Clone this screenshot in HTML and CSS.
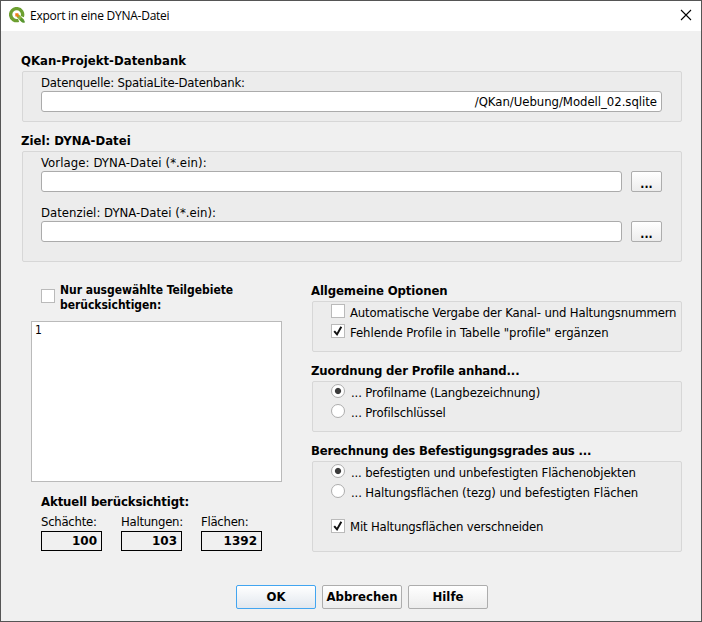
FILE: index.html
```html
<!DOCTYPE html>
<html lang="de">
<head>
<meta charset="utf-8">
<title>Export in eine DYNA-Datei</title>
<link rel="stylesheet" href="styles.css">
</head>
<body>
<div class="dialog">
  <header class="titlebar">
    <svg class="logo" width="16" height="16" viewBox="0 0 16 16">
      <path d="M9.6 13.3A6 6 0 1 1 13.3 9.6" fill="none" stroke="#6c9f30" stroke-width="3.4"/>
      <path d="M8.3 8.3L14 14" stroke="#8cb63c" stroke-width="3.4"/>
      <path d="M10.5 12.8l2-2 3.2 3.2v1.8h-2z" fill="#589632"/>
      <path d="M6.3 6.3h3.4L8.8 7.5l1.4 1.4-1.3 1.3-1.4-1.4-1.2.9z" fill="#ee7913"/>
    </svg>
    <span class="title">Export in eine DYNA-Datei</span>
    <svg class="close" width="12" height="12" viewBox="0 0 12 12"><path d="M1 1l10 10M11 1L1 11" stroke="#000" stroke-width="1.1" fill="none"/></svg>
  </header>
  <main class="content">
    <section>
      <h2><span class="w-qkan">QKan-Projekt-Datenbank</span></h2>
      <div class="group source">
        <div class="label"><span class="w-quelle">Datenquelle: SpatiaLite-Datenbank:</span></div>
        <div class="input right"><span class="w-path">/QKan/Uebung/Modell_02.sqlite</span></div>
      </div>
    </section>
    <section class="target-section">
      <h2><span class="w-ziel">Ziel: DYNA-Datei</span></h2>
      <div class="group target">
        <div class="label"><span class="w-vorlage">Vorlage: DYNA-Datei (*.ein):</span></div>
        <div class="file-row"><div class="input"></div><div class="browse">...</div></div>
        <div class="label second"><span class="w-datenziel">Datenziel: DYNA-Datei (*.ein):</span></div>
        <div class="file-row"><div class="input"></div><div class="browse">...</div></div>
      </div>
    </section>
    <div class="columns">
      <div class="left">
        <div class="only">
          <i class="check"></i>
          <b><span>Nur ausgewählte Teilgebiete</span><br><span>berücksichtigen:</span></b>
        </div>
        <div class="list">1</div>
        <h2 class="current"><span class="w-aktuell">Aktuell berücksichtigt:</span></h2>
        <div class="counts">
          <div><div class="label"><span class="w-count">Schächte:</span></div><div class="count">100</div></div>
          <div><div class="label"><span class="w-count">Haltungen:</span></div><div class="count">103</div></div>
          <div><div class="label"><span class="w-count">Flächen:</span></div><div class="count">1392</div></div>
        </div>
      </div>
      <div class="options">
        <section>
          <h2><span class="w-allg">Allgemeine Optionen</span></h2>
          <div class="group opts">
            <div class="option"><i class="check"></i><span class="w-auto">Automatische Vergabe der Kanal- und Haltungsnummern</span></div>
            <div class="option"><i class="check"><svg width="12" height="12" viewBox="0 0 12 12"><path d="M2.2 6.2L5 9.4 9.3 1.8" /></svg></i><span class="w-fehl">Fehlende Profile in Tabelle "profile" ergänzen</span></div>
          </div>
        </section>
        <section>
          <h2><span class="w-zuord">Zuordnung der Profile anhand...</span></h2>
          <div class="group opts">
            <div class="option"><i class="radio on"></i><span class="w-name">... Profilname (Langbezeichnung)</span></div>
            <div class="option"><i class="radio"></i><span>... Profilschlüssel</span></div>
          </div>
        </section>
        <section>
          <h2><span class="w-berech">Berechnung des Befestigungsgrades aus ...</span></h2>
          <div class="group opts tall">
            <div class="option"><i class="radio on"></i><span class="w-bef">... befestigten und unbefestigten Flächenobjekten</span></div>
            <div class="option"><i class="radio"></i><span>... Haltungsflächen (tezg) und befestigten Flächen</span></div>
            <div class="option cut"><i class="check"><svg width="12" height="12" viewBox="0 0 12 12"><path d="M2.2 6.2L5 9.4 9.3 1.8" /></svg></i><span class="w-mit">Mit Haltungsflächen verschneiden</span></div>
          </div>
        </section>
      </div>
    </div>
    <footer class="buttons">
      <div class="button default">OK</div>
      <div class="button">Abbrechen</div>
      <div class="button">Hilfe</div>
    </footer>
  </main>
</div>
</body>
</html>
```

FILE: styles.css
```css
* { box-sizing: border-box; }
body {
  margin: 0;
  font-family: "DejaVu Sans Condensed", "DejaVu Sans", sans-serif;
  font-stretch: condensed;
  font-size: 13px;
  color: #000;
}
.dialog {
  width: 702px;
  height: 622px;
  border: 1px solid #555;
  background: #f0f0f0;
  overflow: hidden;
}
.titlebar {
  height: 30px;
  background: #fff;
  display: flex;
  align-items: center;
  padding: 0 9px 2px 8px;
  font: 12px "Open Sans", sans-serif;
}
.title { margin-left: 5px; flex: 1; white-space: nowrap; letter-spacing: -.25px; }
.content { padding: 19px 19px 0 20px; }
span { white-space: nowrap; }
h2 {
  margin: 0;
  height: 20px;
  font-size: 13px;
  font-weight: bold;
  line-height: 22px;
}
.w-qkan, .w-ziel { letter-spacing: .03px; }
.w-aktuell, .w-allg { letter-spacing: -.1px; }
.w-zuord { letter-spacing: -.13px; }
.w-berech { letter-spacing: -.17px; }
.w-quelle { letter-spacing: -.17px; }
.w-path { letter-spacing: -.03px; }
.w-vorlage { letter-spacing: .09px; }
.w-datenziel { letter-spacing: .02px; }
.w-count { letter-spacing: -.27px; }
.group {
  margin: 1px 0 0 1px;
  border: 1px solid #d7d7d7;
  border-radius: 2px;
  background: #ececec;
}
.source { height: 51px; padding: 3px 19px 0 18px; }
.target-section { margin-top: 8px; }
.target { height: 111px; padding: 3px 19px 0 18px; }
.label { height: 16px; line-height: 16px; }
.label.second { margin-top: 13px; }
.input {
  flex: 1;
  height: 21px;
  line-height: 20px;
  border: 1px solid #ababab;
  border-radius: 3px;
  background: #fff;
  padding: 0 4px;
}
.right { text-align: right; }
.file-row { display: flex; gap: 9px; }
.browse {
  width: 31px;
  height: 21px;
  border: 1px solid #adadad;
  border-radius: 2px;
  background: linear-gradient(#fff, #ececec);
  text-align: center;
  font-size: 12px;
  font-weight: bold;
  line-height: 25px;
}
.columns { display: flex; margin-top: 18px; height: 272px; }
.left { width: 290px; padding-left: 10px; }
.only { display: flex; padding: 1px 0 0 10px; font-size: 12px; line-height: 15px; letter-spacing: -.03px; }
.only .check { margin: 8px 5px 0 0; }
.only b { height: 31px; padding-top: 2px; }
.check {
  flex: none;
  width: 14px;
  height: 14px;
  border: 1px solid #bababa;
  background: #fff;
}
.check svg { display: block; }
.check path { fill: none; stroke: #111; stroke-width: 2; }
.list {
  width: 251px;
  height: 161px;
  margin-top: 9px;
  padding: 1px 3px;
  border: 1px solid #bababa;
  background: #fff;
  font-size: 12px;
  line-height: 15px;
}
.current { margin: 10px 0 0 10px; line-height: 20px; }
.counts { display: flex; gap: 19px; margin-left: 10px; padding-top: 2px; }
.counts > div { width: 61px; flex: none; }
.counts .label { height: 17px; }
.count {
  height: 20px;
  border: 1px solid #000;
  padding-right: 4px;
  text-align: right;
  font: bold 12px/19px "DejaVu Sans", sans-serif;
}
.options { flex: 1; }
.opts { height: 51px; padding: 1px 0 0 18px; margin-bottom: 8px; }
.tall { height: 91px; }
.option {
  height: 20px;
  display: flex;
  align-items: flex-start;
  line-height: 20px;
  letter-spacing: -.13px;
}
.w-auto, .w-bef { letter-spacing: -.16px; }
.w-fehl { letter-spacing: -.06px; }
.w-mit { letter-spacing: -.19px; }
.option .check, .option .radio { margin: 1px 5px 0 0; }
.option.cut { margin-top: 14px; }
.option.cut .check { margin-top: 2px; }
.radio {
  flex: none;
  width: 14px;
  height: 14px;
  border: 1px solid #adadad;
  border-radius: 50%;
  background: #fff;
}
.on { background: radial-gradient(circle, #3b3b3b 2.6px, #fff 3.6px); }
.option .radio { margin-right: 6px; }
.buttons { display: flex; gap: 6px; margin: 33px 0 0 215px; }
.button {
  width: 80px;
  height: 24px;
  border: 1px solid #adadad;
  border-radius: 2px;
  background: linear-gradient(#fff, #ececec);
  text-align: center;
  font-size: 13px;
  font-weight: bold;
  line-height: 22px;
}
.default { border-color: #42a5f0; background: linear-gradient(#fff, #e1e7ee); }
```
